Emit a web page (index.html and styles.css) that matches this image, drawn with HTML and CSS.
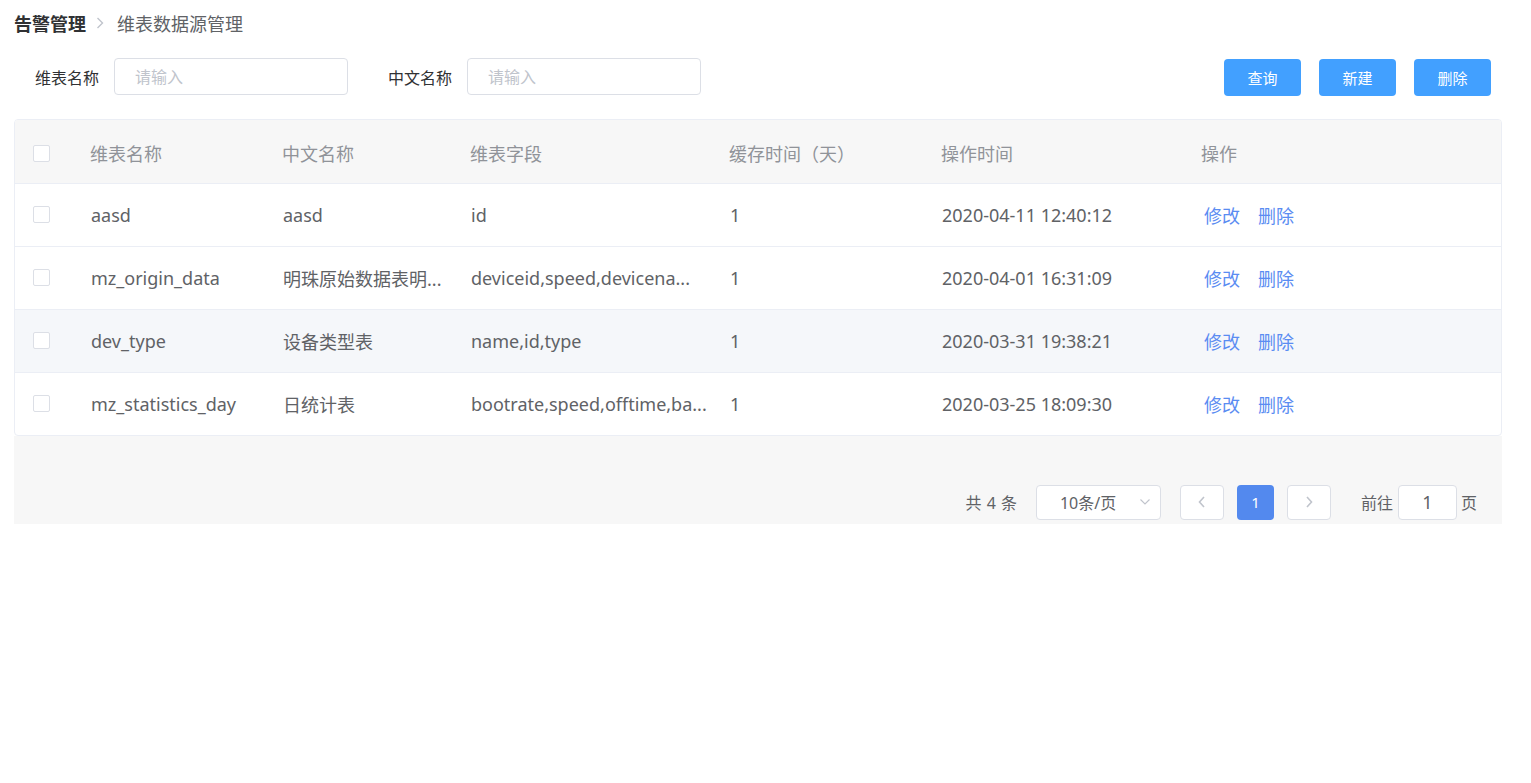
FILE: index.html
```html
<!DOCTYPE html>
<html lang="zh-CN">
<head>
<meta charset="utf-8">
<title>维表数据源管理</title>
<link rel="stylesheet" href="styles.css">
</head>
<body>
<div class="page">
  <div class="breadcrumb">
    <span class="crumb-main">告警管理</span>
    <svg class="crumb-sep" width="10" height="14" viewBox="0 0 10 14"><path d="M2.5 2 L7.5 7 L2.5 12" fill="none" stroke="#c0c4cc" stroke-width="1.4"/></svg>
    <span class="crumb-sub">维表数据源管理</span>
  </div>

  <div class="toolbar">
    <div class="filters">
      <label class="field">
        <span class="field-label">维表名称</span>
        <input class="field-input" type="text" placeholder="请输入">
      </label>
      <label class="field">
        <span class="field-label">中文名称</span>
        <input class="field-input" type="text" placeholder="请输入">
      </label>
    </div>
    <div class="actions">
      <button class="btn">查询</button>
      <button class="btn">新建</button>
      <button class="btn">删除</button>
    </div>
  </div>

  <div class="table-wrap">
    <table class="grid">
      <colgroup>
        <col class="c-chk"><col class="c-1"><col class="c-2"><col class="c-3"><col class="c-4"><col class="c-5"><col class="c-6">
      </colgroup>
      <thead>
        <tr>
          <th class="chk-cell"><span class="checkbox"></span></th>
          <th>维表名称</th>
          <th>中文名称</th>
          <th>维表字段</th>
          <th>缓存时间（天）</th>
          <th>操作时间</th>
          <th>操作</th>
        </tr>
      </thead>
      <tbody>
        <tr>
          <td class="chk-cell"><span class="checkbox"></span></td>
          <td>aasd</td>
          <td>aasd</td>
          <td>id</td>
          <td>1</td>
          <td>2020-04-11 12:40:12</td>
          <td class="ops"><a>修改</a><a>删除</a></td>
        </tr>
        <tr>
          <td class="chk-cell"><span class="checkbox"></span></td>
          <td>mz_origin_data</td>
          <td>明珠原始数据表明...</td>
          <td>deviceid,speed,devicena...</td>
          <td>1</td>
          <td>2020-04-01 16:31:09</td>
          <td class="ops"><a>修改</a><a>删除</a></td>
        </tr>
        <tr class="hover">
          <td class="chk-cell"><span class="checkbox"></span></td>
          <td>dev_type</td>
          <td>设备类型表</td>
          <td>name,id,type</td>
          <td>1</td>
          <td>2020-03-31 19:38:21</td>
          <td class="ops"><a>修改</a><a>删除</a></td>
        </tr>
        <tr>
          <td class="chk-cell"><span class="checkbox"></span></td>
          <td>mz_statistics_day</td>
          <td>日统计表</td>
          <td>bootrate,speed,offtime,ba...</td>
          <td>1</td>
          <td>2020-03-25 18:09:30</td>
          <td class="ops"><a>修改</a><a>删除</a></td>
        </tr>
      </tbody>
    </table>
  </div>

  <div class="pager-bar">
    <span class="total">共 4 条</span>
    <div class="size-select">
      <span>10条/页</span>
      <svg width="12" height="8" viewBox="0 0 12 8"><path d="M1.5 1.5 L6 6 L10.5 1.5" fill="none" stroke="#c0c4cc" stroke-width="1.1"/></svg>
    </div>
    <button class="pg-btn"><svg width="10" height="14" viewBox="0 0 10 14"><path d="M7 2 L2.5 7 L7 12" fill="none" stroke="#c0c4cc" stroke-width="1.6"/></svg></button>
    <span class="pg-num">1</span>
    <button class="pg-btn"><svg width="10" height="14" viewBox="0 0 10 14"><path d="M3 2 L7.5 7 L3 12" fill="none" stroke="#c0c4cc" stroke-width="1.6"/></svg></button>
    <span class="jump">前往</span>
    <span class="jump-input">1</span>
    <span class="jump-unit">页</span>
  </div>
</div>
</body>
</html>
```

FILE: styles.css
```css
* { box-sizing: border-box; }

body {
  margin: 0;
  background: #fff;
  font-family: "Noto Sans", "Noto Sans CJK SC", sans-serif;
  color: #606266;
}

.page {
  padding: 10px 29px 0 14px;
}

.breadcrumb {
  display: flex;
  align-items: center;
  height: 26px;
  font-size: 18px;
}
.crumb-main {
  font-weight: 700;
  color: #303133;
}
.crumb-sep {
  margin: 0 12px 0 9px;
}
.crumb-sub {
  color: #606266;
}

.toolbar {
  display: flex;
  align-items: flex-start;
  justify-content: space-between;
  margin-top: 22px;
  height: 38px;
}
.filters {
  display: flex;
  align-items: center;
  padding-left: 21px;
  gap: 40px;
}
.field {
  display: flex;
  align-items: center;
  gap: 15px;
}
.field-label {
  font-size: 16px;
  color: #303133;
  white-space: nowrap;
}
.field-input {
  width: 234px;
  height: 37px;
  border: 1px solid #dcdfe6;
  border-radius: 4px;
  padding: 0 20px;
  font-size: 16px;
  font-family: inherit;
  color: #606266;
  outline: none;
}
.field-input::placeholder {
  color: #c0c4cc;
}

.actions {
  display: flex;
  gap: 18px;
  padding-right: 11px;
  margin-top: 1px;
}
.btn {
  width: 77px;
  height: 37px;
  border: none;
  border-radius: 4px;
  background: #42a0ff;
  color: #fff;
  font-size: 15px;
  font-family: inherit;
}

.table-wrap {
  margin-top: 23px;
  border: 1px solid #ebeef5;
  border-radius: 4px;
  overflow: hidden;
}
.grid {
  width: 100%;
  border-collapse: collapse;
  table-layout: fixed;
  font-size: 18px;
}
.c-chk { width: 60px; }
.c-1 { width: 192px; }
.c-2 { width: 188px; }
.c-3 { width: 259px; }
.c-4 { width: 212px; }
.c-5 { width: 260px; }
.grid th,
.grid td {
  height: 63px;
  padding: 0 0 0 15px;
  text-align: left;
  font-weight: 400;
  white-space: nowrap;
  overflow: hidden;
  border-bottom: 1px solid #ebeef5;
}
.grid tbody tr:last-child td {
  border-bottom: none;
}
.grid th {
  background: #f7f7f7;
  color: #909399;
  height: 63px;
  padding-top: 4px;
}
.grid td {
  color: #606266;
  padding-left: 16px;
}
.grid tr.hover td {
  background: #f5f7fa;
}
.grid .chk-cell {
  padding: 0 0 0 18px;
}
.grid th.chk-cell {
  padding-top: 4px;
}
.checkbox {
  display: block;
  width: 17px;
  height: 17px;
  border: 1px solid #dcdfe6;
  border-radius: 2px;
  background: #fff;
}
.grid .ops {
  padding-left: 18px;
}
.ops a {
  color: #5a8cf2;
  margin-right: 18px;
  cursor: pointer;
}

.pager-bar {
  display: flex;
  align-items: center;
  justify-content: flex-end;
  height: 88px;
  padding: 48px 25px 4px 0;
  background: #f7f7f7;
  font-size: 16px;
  color: #606266;
}
.total {
  margin-right: 19px;
  word-spacing: 1px;
}
.size-select {
  display: flex;
  align-items: center;
  justify-content: space-between;
  width: 125px;
  height: 35px;
  padding: 0 9px 0 23px;
  background: #fff;
  border: 1px solid #dcdfe6;
  border-radius: 4px;
  font-size: 16px;
  margin-right: 19px;
}
.pg-btn {
  display: flex;
  align-items: center;
  justify-content: center;
  width: 44px;
  height: 35px;
  background: #fff;
  border: 1px solid #dcdfe6;
  border-radius: 4px;
  padding: 0;
}
.pg-num {
  display: flex;
  align-items: center;
  justify-content: center;
  width: 37px;
  height: 35px;
  margin: 0 13px;
  background: #5389ee;
  border-radius: 4px;
  color: #fff;
  font-size: 15px;
}
.jump {
  margin-left: 30px;
  margin-right: 5px;
}
.jump-input {
  display: flex;
  align-items: center;
  justify-content: center;
  width: 59px;
  height: 35px;
  background: #fff;
  border: 1px solid #dcdfe6;
  border-radius: 4px;
  font-size: 18px;
}
.jump-unit {
  margin-left: 4px;
  font-size: 16px;
}
```
